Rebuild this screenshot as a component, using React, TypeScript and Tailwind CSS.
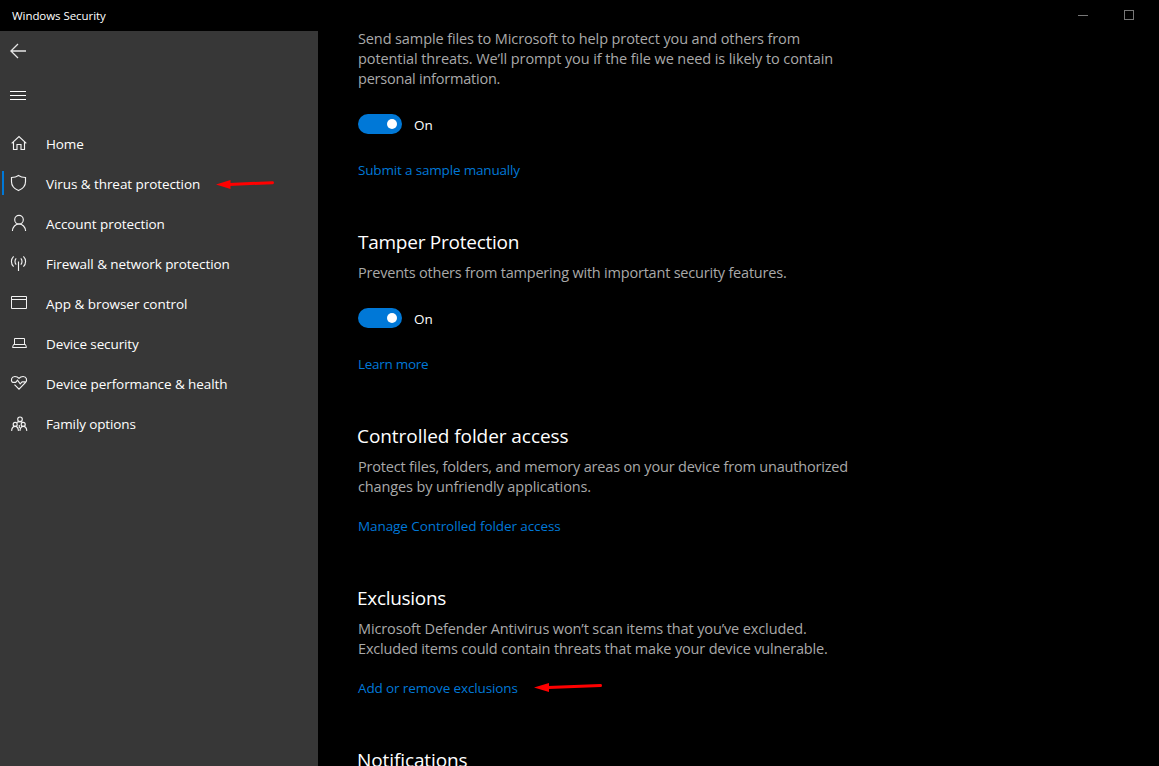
import React from "react";

type NavEntry = { label: string; tracking: string; icon: React.ReactNode; active?: boolean };

const Icon = ({ children }: { children: React.ReactNode }) => (
  <svg width="18" height="18" viewBox="0 0 18 18" fill="none" stroke="#f2f2f2" strokeWidth="1.15" className="shrink-0">
    {children}
  </svg>
);

const HomeIcon = (
  <Icon>
    <path d="M1.7 9.3 9 2.5l7.300 6.800M3.500 8v7.500h3.500v-5h4v5h3.500V8" />
  </Icon>
);
const ShieldIcon = (
  <Icon>
    <path d="M8.500 1.500C6.500 3 4 3.500 1.500 3.500v4.200c0 4.100 3 7.100 7 8.900 4-1.800 7-4.800 7-8.900V3.500c-2.500 0-5-.5-7-2Z" />
  </Icon>
);
const PersonIcon = (
  <Icon>
    <circle cx="9" cy="5.700" r="4.300" />
    <path d="M2.400 17c.2-4 3-7 6.600-7s6.400 3 6.600 7" />
  </Icon>
);
const SignalIcon = (
  <Icon>
    <path d="M8.500 7.500V17M6.200 4.300c-1.600 1.700-1.600 4.700 0 6.400M10.800 4.300c1.600 1.700 1.600 4.700 0 6.400M3.600 2.300c-2.900 2.900-2.900 7.500 0 10.400M13.400 2.300c2.900 2.900 2.900 7.500 0 10.400" />
  </Icon>
);
const WindowIcon = (
  <Icon>
    <path strokeWidth="1" d="M1.500 2.500h15v12h-15ZM1.500 5.500h15" />
  </Icon>
);
const LaptopIcon = (
  <Icon>
    <path strokeWidth="1" d="M4.500 10.500v-6h10v6M3.500 10.500h12l1 3h-14Z" />
  </Icon>
);
const HeartIcon = (
  <Icon>
    <path d="M2.400 8.300C.6 6.300 1.300 2.500 4.900 2.500c1.900 0 3.100.6 4.100 1.800 1-1.200 2.200-1.800 4.100-1.800 3.600 0 4.300 3.800 2.500 5.800L9 15.200 4.500 10.600M2.300 8.300h3.400l1.800-2.200 2.700 3.700 1.900-1.900h3.200" />
  </Icon>
);
const FamilyIcon = (
  <Icon>
    <circle cx="10" cy="5.300" r="2.300" />
    <circle cx="5.200" cy="10.400" r="2" />
    <circle cx="13.200" cy="10.400" r="2" />
    <path d="M1.600 16.900c.2-2.600 1.600-4.500 3.600-4.500 1.900 0 3 1.600 3.300 4.500M9.900 16.900c.3-2.900 1.400-4.500 3.300-4.500 2 0 3.400 1.900 3.600 4.500M6.600 8.600C7.400 7.900 8.500 7.600 10 7.600c1.300 0 2.200.4 2.800 1M9.300 11v3" />
  </Icon>
);

const nav: NavEntry[] = [
  { label: "Home", tracking: "tracking-[-0.1px]", icon: HomeIcon },
  { label: "Virus & threat protection", tracking: "tracking-[-0.07px]", icon: ShieldIcon, active: true },
  { label: "Account protection", tracking: "tracking-[-0.06px]", icon: PersonIcon },
  { label: "Firewall & network protection", tracking: "tracking-[-0.07px]", icon: SignalIcon },
  { label: "App & browser control", tracking: "tracking-[-0.03px]", icon: WindowIcon },
  { label: "Device security", tracking: "tracking-[-0.11px]", icon: LaptopIcon },
  { label: "Device performance & health", tracking: "tracking-[-0.08px]", icon: HeartIcon },
  { label: "Family options", tracking: "tracking-[-0.12px]", icon: FamilyIcon },
];

const ShortArrow = () => (
  <svg width="59" height="12" viewBox="0 0 59 12" className="shrink-0">
    <path d="M13 6.400 56.500 4.700" stroke="#f00" strokeWidth="3" strokeLinecap="round" />
    <path d="M0 6.500 14.500 2v9Z" fill="#f00" />
  </svg>
);

const LongArrow = () => (
  <svg width="70" height="12" viewBox="0 0 70 12" className="shrink-0">
    <path d="M14 5.400 66.500 3.600" stroke="#f00" strokeWidth="3" strokeLinecap="round" />
    <path d="M0 5.500 15 1v9Z" fill="#f00" />
  </svg>
);

const Line = ({ text, tracking }: { text: string; tracking: string }) => (
  <div className={`whitespace-nowrap ${tracking}`}>{text}</div>
);

const Paragraph = ({ children }: { children: React.ReactNode }) => (
  <div className="text-[14.5px] leading-5 text-[#a9a9a9]">{children}</div>
);

const Heading = ({ text, className }: { text: string; className: string }) => (
  <h2 className={`mb-[7px] mt-12 h-7 whitespace-nowrap text-[19px] leading-7 text-white ${className}`}>{text}</h2>
);

const Link = ({ text, className }: { text: string; className: string }) => (
  <div className={`flex h-5 items-center text-[13.5px] leading-5 text-[#0078d7] ${className}`}>
    <a className="whitespace-nowrap">{text}</a>
  </div>
);

const Toggle = () => (
  <div className="mt-[25px] flex h-5 items-center gap-3">
    <div className="flex h-5 w-11 items-center justify-end rounded-full bg-[#0078d7] pr-[5px]">
      <div className="size-2.5 rounded-full bg-white" />
    </div>
    <span className="pt-0.5 text-[13.5px] leading-5 text-white">On</span>
  </div>
);

export default function App() {
  return (
    <div className="flex h-[766px] w-[1159px] flex-col overflow-hidden bg-black font-['Open_Sans','Noto_Sans',sans-serif]">
      <header className="flex h-[31px] shrink-0 items-center justify-between pl-3 pr-[25px] text-[11.5px] text-white">
        <span className="tracking-[-0.06px]">Windows Security</span>
        <div className="flex items-start gap-[36px] pb-px">
          <div className="mt-[5px] h-px w-2.5 bg-[#777]" />
          <div className="size-2.5 border border-[#777]" />
        </div>
      </header>
      <div className="flex min-h-0 flex-1">
        <aside className="w-[318px] shrink-0 bg-[#373737]">
          <div className="flex h-[41px] items-center pb-px pl-2.5">
            <svg width="18" height="18" viewBox="0 0 18 18" fill="none" stroke="#e6e6e6" strokeWidth="1.3">
              <path d="M16 9H.9M8 2 .9 9 8 16" />
            </svg>
          </div>
          <div className="flex h-[52px] flex-col gap-[3px] pl-2.5 pt-[19px]">
            <div className="h-px w-4 bg-white" />
            <div className="h-px w-4 bg-white" />
            <div className="h-px w-4 bg-white" />
          </div>
          <nav>
            {nav.map((n) => (
              <div key={n.label} className="flex h-10 items-center pl-0.5">
                <div className={`h-6 w-0.5 ${n.active ? "-mt-0.5 bg-[#0078d7]" : ""}`} />
                <div className="w-[42px] pb-0.5 pl-1.5">{n.icon}</div>
                <span className={`whitespace-nowrap text-[13.5px] leading-5 text-white ${n.tracking}`}>{n.label}</span>
                {n.active && (
                  <div className="ml-4">
                    <ShortArrow />
                  </div>
                )}
              </div>
            ))}
          </nav>
        </aside>
        <main className="min-w-0 flex-1 overflow-hidden pl-10">
          <div className="-mt-0.5">
            <Paragraph>
              <Line text="Send sample files to Microsoft to help protect you and others from" tracking="tracking-[-0.11px]" />
              <Line text="potential threats. We’ll prompt you if the file we need is likely to contain" tracking="tracking-[-0.09px]" />
              <Line text="personal information." tracking="tracking-[-0.22px]" />
            </Paragraph>
            <Toggle />
            <Link className="mt-[26px] tracking-[-0.17px]" text="Submit a sample manually" />
            <Heading className="tracking-[-0.25px]" text="Tamper Protection" />
            <Paragraph>
              <Line text="Prevents others from tampering with important security features." tracking="tracking-[-0.21px]" />
            </Paragraph>
            <Toggle />
            <Link className="mt-[26px] tracking-[-0.28px]" text="Learn more" />
            <Heading className="-ml-px tracking-[-0.06px]" text="Controlled folder access" />
            <Paragraph>
              <Line text="Protect files, folders, and memory areas on your device from unauthorized" tracking="tracking-[-0.185px]" />
              <Line text="changes by unfriendly applications." tracking="tracking-[-0.13px]" />
            </Paragraph>
            <Link className="mt-[19px] tracking-[-0.08px]" text="Manage Controlled folder access" />
            <Heading className="-ml-px tracking-[-0.3px]" text="Exclusions" />
            <Paragraph>
              <Line text="Microsoft Defender Antivirus won’t scan items that you’ve excluded." tracking="tracking-[-0.12px]" />
              <Line text="Excluded items could contain threats that make your device vulnerable." tracking="tracking-[-0.17px]" />
            </Paragraph>
            <div className="mt-[19px] flex items-center gap-4">
              <Link className="tracking-[-0.125px]" text="Add or remove exclusions" />
              <LongArrow />
            </div>
            <Heading className="-ml-px tracking-[-0.1px]" text="Notifications" />
          </div>
        </main>
      </div>
    </div>
  );
}
